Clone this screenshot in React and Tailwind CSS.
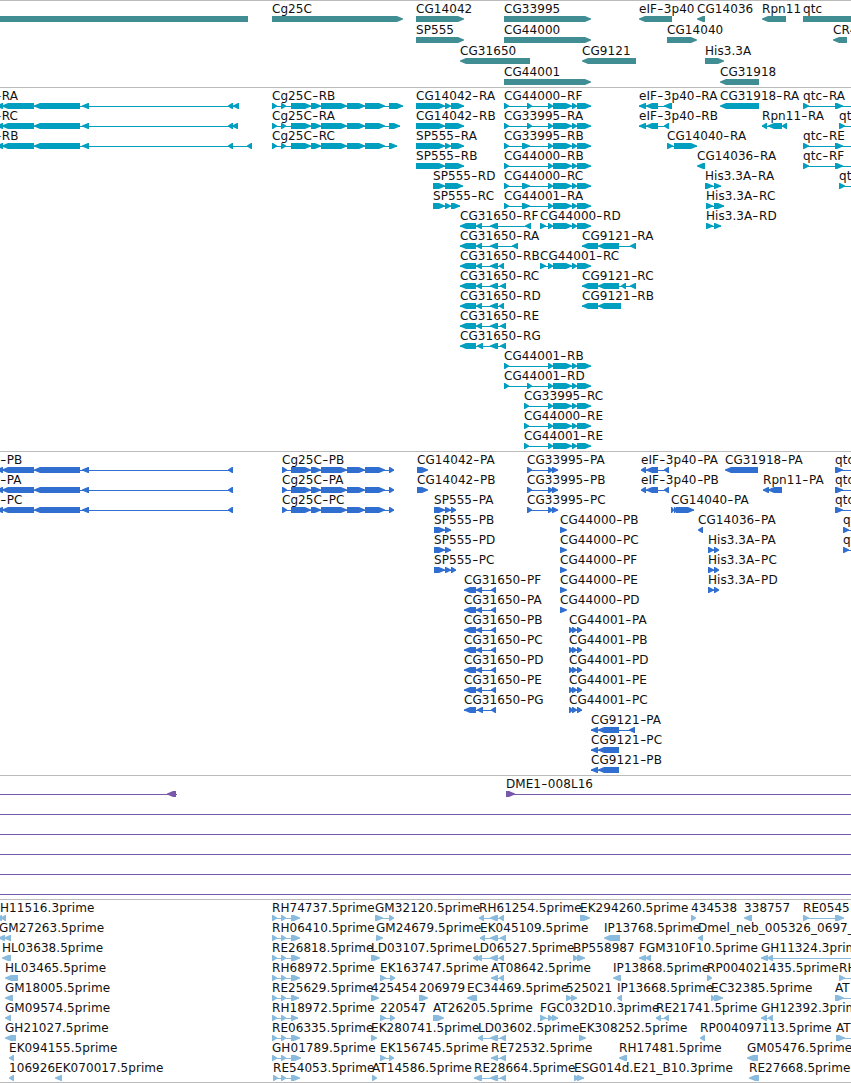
// every feature: [x, label, direction, exons, lineEnd]
// direction: 1 = forward, -1 = reverse, 0 = no arrow head

// genes
const genes = [
  [
    [-10, "", 0, [[-10, 248]]],
    [272, "Cg25C", 1, [[272, 403]]],
    [416, "CG14042", 1, [[416, 464]]],
    [504, "CG33995", 1, [[504, 591]]],
    [639, "eIF-3p40", -1, [[639, 672]]],
    [697, "CG14036", -1, [[697, 705]]],
    [762, "Rpn11", -1, [[762, 786]]],
    [803, "qtc", 0, [[803, 870]]],
  ],
  [
    [416, "SP555", 1, [[416, 464]]],
    [504, "CG44000", 1, [[504, 591]]],
    [667, "CG14040", 1, [[667, 697]]],
    [833, "CR43", -1, [[833, 847]]],
  ],
  [
    [460, "CG31650", -1, [[460, 530]]],
    [582, "CG9121", -1, [[582, 636]]],
    [705, "His3.3A", 1, [[705, 724]]],
  ],
  [
    [504, "CG44001", 1, [[504, 591]]],
    [720, "CG31918", -1, [[720, 759]]],
  ],
];

// exon groups shared between transcripts
const LEFT = [[-3, 3], [2, 34], [34, 80], [82, 89], [228, 233]];
const COL = [[291, 293], [292, 311], [311, 321], [321, 347], [347, 365], [365, 385]];
const TAIL = [[548, 553], [553, 572], [572, 577], [577, 591]];
const CG31 = [[460, 476], [476, 482], [490, 498]];
const CG91 = [[582, 598], [598, 619]];
const EIF = [[639, 646], [646, 658]];
const QTC = [[803, 809], [835, 843]];

const transcripts = [
  [
    [-5, "-RA", -1, [...LEFT, [233, 239]]],
    [272, "Cg25C-RB", 1, [[272, 277], [281, 286], ...COL, [389, 403]]],
    [416, "CG14042-RA", 1, [[416, 445], [445, 451], [451, 464]]],
    [504, "CG44000-RF", 1, [[504, 509], [527, 532], ...TAIL]],
    [639, "eIF-3p40-RA", -1, [...EIF, [664, 672]]],
    [720, "CG31918-RA", -1, [[720, 759]]],
    [803, "qtc-RA", 1, QTC, 870],
  ],
  [
    [-5, "-RC", -1, [...LEFT, [232, 238]]],
    [272, "Cg25C-RA", 1, [[272, 277], [281, 286], ...COL, [389, 400]]],
    [416, "CG14042-RB", 1, [[416, 445], [445, 464]]],
    [504, "CG33995-RA", 1, [[504, 509], [527, 532], ...TAIL]],
    [639, "eIF-3p40-RB", -1, [...EIF, [664, 669]]],
    [762, "Rpn11-RA", -1, [[762, 767], [768, 782], [782, 787]]],
    [839, "qtc-RD", 1, [[839, 845]], 870],
  ],
  [
    [-5, "-RB", -1, [...LEFT, [247, 252]]],
    [272, "Cg25C-RC", 1, [[272, 277], [281, 286], ...COL, [389, 397]]],
    [416, "SP555-RA", 1, [[416, 445], [445, 451], [451, 464]]],
    [504, "CG33995-RB", 1, [[504, 509], [522, 530], ...TAIL]],
    [667, "CG14040-RA", 1, [[667, 673], [674, 697]]],
    [803, "qtc-RE", 1, QTC, 870],
  ],
  [
    [416, "SP555-RB", 1, [[416, 445], [445, 464]]],
    [504, "CG44000-RB", 1, [[504, 509], ...TAIL]],
    [697, "CG14036-RA", -1, [[697, 705]]],
    [803, "qtc-RF", 1, QTC, 870],
  ],
  [
    [433, "SP555-RD", 1, [[433, 445], [445, 463]]],
    [504, "CG44000-RC", 1, [[504, 509], [522, 530], ...TAIL]],
    [705, "His3.3A-RA", 1, [[705, 713], [714, 721]]],
    [839, "qtc-RB", 1, [[839, 845]], 870],
  ],
  [
    [433, "SP555-RC", 1, [[433, 445], [445, 451], [451, 460]]],
    [504, "CG44001-RA", 1, [[504, 509], [522, 530], ...TAIL]],
    [706, "His3.3A-RC", 1, [[706, 713], [714, 724]]],
  ],
  [
    [460, "CG31650-RF", -1, [...CG31, [525, 531]]],
    [540, "CG44000-RD", 1, [[540, 546], ...TAIL]],
    [706, "His3.3A-RD", 1, [[706, 713], [714, 721]]],
  ],
  [
    [460, "CG31650-RA", -1, [...CG31, [512, 518]]],
    [582, "CG9121-RA", -1, [...CG91, [630, 636]]],
  ],
  [
    [460, "CG31650-RB", -1, [...CG31, [499, 504]]],
    [540, "CG44001-RC", 1, [[540, 546], ...TAIL]],
  ],
  [
    [460, "CG31650-RC", -1, [...CG31, [500, 506]]],
    [582, "CG9121-RC", -1, [...CG91, [621, 626], [630, 636]]],
  ],
  [
    [460, "CG31650-RD", -1, [...CG31, [499, 504]]],
    [582, "CG9121-RB", -1, [[582, 598], [598, 621]]],
  ],
  [[460, "CG31650-RE", -1, [...CG31, [500, 506]]]],
  [[460, "CG31650-RG", -1, [[460, 476], [477, 483], [490, 498], [500, 506]]]],
  [[504, "CG44001-RB", 1, [[504, 509], ...TAIL]]],
  [[504, "CG44001-RD", 1, [[504, 509], [527, 532], ...TAIL]]],
  [[524, "CG33995-RC", 1, [[524, 529], ...TAIL]]],
  [[524, "CG44000-RE", 1, [[524, 529], ...TAIL]]],
  [[524, "CG44001-RE", 1, [[524, 529], ...TAIL]]],
];

const COL_P = [[282, 287], ...COL, [389, 394]];
const P339 = [[527, 532], [548, 553], [552, 558]];
const PEIF = [[641, 646], [646, 658], [664, 669]];
const P555 = [[434, 445], [445, 451]];
const P316 = [[464, 476], [476, 482], [491, 496]];
const P440 = [[560, 567]];
const P441 = [[569, 573], [572, 577], [577, 582]];
const PHIS = [[708, 714], [714, 719]];

const proteins = [
  [
    [0, "-PB", -1, LEFT],
    [282, "Cg25C-PB", 1, COL_P],
    [417, "CG14042-PA", 1, [[417, 428]]],
    [527, "CG33995-PA", 1, P339],
    [641, "eIF-3p40-PA", -1, PEIF],
    [725, "CG31918-PA", -1, [[725, 758]]],
    [835, "qtc-PA", 1, [[835, 843]], 870],
  ],
  [
    [0, "-PA", -1, LEFT],
    [282, "Cg25C-PA", 1, COL_P],
    [417, "CG14042-PB", 1, [[417, 428]]],
    [527, "CG33995-PB", 1, P339],
    [641, "eIF-3p40-PB", -1, PEIF],
    [763, "Rpn11-PA", -1, [[763, 769], [768, 782]]],
    [835, "qtc-PE", 1, [[835, 843]], 870],
  ],
  [
    [0, "-PC", -1, LEFT],
    [282, "Cg25C-PC", 1, COL_P],
    [434, "SP555-PA", 1, [...P555, [451, 456]]],
    [527, "CG33995-PC", 1, P339],
    [671, "CG14040-PA", 1, [[671, 674], [674, 677], [676, 694]]],
    [835, "qtc-PF", 1, [[835, 843]], 870],
  ],
  [
    [434, "SP555-PB", 1, P555],
    [560, "CG44000-PB", 1, P440],
    [698, "CG14036-PA", -1, [[698, 703]]],
    [843, "qtc-PD", 1, [[843, 849]], 870],
  ],
  [
    [434, "SP555-PD", 1, P555],
    [560, "CG44000-PC", 1, P440],
    [708, "His3.3A-PA", 1, PHIS],
    [843, "qtc-PB", 1, [[843, 849]], 870],
  ],
  [
    [434, "SP555-PC", 1, [...P555, [451, 456]]],
    [560, "CG44000-PF", 1, P440],
    [708, "His3.3A-PC", 1, PHIS],
  ],
  [
    [464, "CG31650-PF", -1, P316],
    [560, "CG44000-PE", 1, P440],
    [708, "His3.3A-PD", 1, PHIS],
  ],
  [
    [464, "CG31650-PA", -1, P316],
    [560, "CG44000-PD", 1, P440],
  ],
  [
    [464, "CG31650-PB", -1, P316],
    [569, "CG44001-PA", 1, P441],
  ],
  [
    [464, "CG31650-PC", -1, P316],
    [569, "CG44001-PB", 1, P441],
  ],
  [
    [464, "CG31650-PD", -1, P316],
    [569, "CG44001-PD", 1, P441],
  ],
  [
    [464, "CG31650-PE", -1, P316],
    [569, "CG44001-PE", 1, P441],
  ],
  [
    [464, "CG31650-PG", -1, [[464, 476], [477, 483], [491, 496]]],
    [569, "CG44001-PC", 1, P441],
  ],
  [[591, "CG9121-PA", -1, [[591, 598], [598, 619], [629, 635]]]],
  [[591, "CG9121-PC", -1, [[591, 598], [598, 619]]]],
  [[591, "CG9121-PB", -1, [[591, 598], [598, 619]]]],
];

// BAC ends, most of them span the whole view
const bacs = [
  [
    [-10, "", -1, [[-20, -10], [167, 176]], 177],
    [506, "DME1-008L16", 1, [[506, 515]], 870],
  ],
  [[-10, "", 1, [], 870]],
  [[-10, "", 1, [], 870]],
  [[-10, "", 1, [], 870]],
  [[-10, "", 1, [], 870]],
  [[-10, "", 1, [], 870]],
];

const ests = [
  [
    [0, "H11516.3prime", -1, [[-3, 2], [1, 6]]],
    [272, "RH74737.5prime", 1, [[272, 277], [281, 286], [291, 300]]],
    [375, "GM32120.5prime", 1, [[375, 383], [389, 394]]],
    [479, "RH61254.5prime", -1, [[479, 484], [490, 498], [499, 504]]],
    [580, "EK294260.5prime", 1, [[580, 590]]],
    [691, "434538", 1, [[691, 696]]],
    [744, "338757", -1, [[744, 752]]],
    [803, "RE05451.5prime", 1, [[803, 809], [835, 844]]],
  ],
  [
    [-1, "GM27263.5prime", -1, [[-2, 5], [4, 11]]],
    [272, "RH06410.5prime", 1, [[272, 277], [281, 286], [291, 300]]],
    [376, "GM24679.5prime", 1, [[376, 383]]],
    [480, "EK045109.5prime", -1, [[480, 485], [490, 498], [500, 506]]],
    [604, "IP13768.5prime", -1, [[604, 620]]],
    [698, "Dmel_neb_005326_0697_1", -1, [[698, 703]]],
  ],
  [
    [2, "HL03638.5prime", -1, [[2, 11]]],
    [272, "RE26818.5prime", 1, [[272, 277], [281, 286], [291, 300]]],
    [371, "LD03107.5prime", 1, [[371, 380]]],
    [473, "LD06527.5prime", -1, [[473, 478], [476, 482], [490, 498], [499, 504]]],
    [573, "BP558987", 1, [[573, 578], [577, 585]]],
    [639, "FGM310F10.5prime", -1, [[639, 646], [645, 651]]],
    [761, "GH11324.3prime", -1, [[761, 768], [767, 773]], 870],
  ],
  [
    [5, "HL03465.5prime", -1, [[5, 18]]],
    [272, "RH68972.5prime", 1, [[272, 277], [281, 286], [291, 300]]],
    [380, "EK163747.5prime", 1, [[380, 386], [390, 395]]],
    [491, "AT08642.5prime", -1, [[491, 498], [499, 504]]],
    [613, "IP13868.5prime", -1, [[613, 621]]],
    [707, "RP004021435.5prime", 1, [[707, 712]]],
    [839, "RH", 1, [[839, 845]], 870],
  ],
  [
    [5, "GM18005.5prime", -1, [[5, 13]]],
    [272, "RE25629.5prime", 1, [[272, 277], [281, 286], [291, 299]]],
    [371, "425454", 1, [[371, 379]]],
    [419, "206979", 1, [[419, 428]]],
    [467, "EC34469.5prime", -1, [[467, 477]]],
    [566, "525021", 1, [[566, 572], [571, 577]]],
    [617, "IP13668.5prime", -1, [[617, 622]]],
    [711, "EC32385.5prime", 1, [[711, 715], [714, 723]]],
    [835, "AT", 1, [[835, 844]], 870],
  ],
  [
    [5, "GM09574.5prime", -1, [[5, 11]]],
    [272, "RH18972.5prime", 1, [[272, 277], [281, 286], [291, 298]]],
    [380, "220547", 1, [[380, 386], [390, 395]]],
    [433, "AT26205.5prime", 1, [[433, 444]]],
    [540, "FGC032D10.3prime", 1, [[540, 546], [548, 553], [552, 558]]],
    [656, "RE21741.5prime", -1, [[656, 661], [664, 669]]],
    [761, "GH12392.3prime", -1, [[761, 767], [768, 773]]],
  ],
  [
    [5, "GH21027.5prime", -1, [[5, 16]]],
    [272, "RE06335.5prime", 1, [[272, 277], [281, 286], [291, 300]]],
    [371, "EK280741.5prime", 1, [[371, 377]]],
    [478, "LD03602.5prime", -1, [[478, 483], [490, 498], [500, 506]]],
    [579, "EK308252.5prime", 1, [[579, 586]]],
    [700, "RP004097113.5prime", -1, [[700, 705]]],
    [836, "AT", 1, [[836, 845]], 870],
  ],
  [
    [9, "EK094155.5prime", -1, [[9, 14]]],
    [272, "GH01789.5prime", 1, [[272, 277], [281, 286], [291, 301]]],
    [380, "EK156745.5prime", 1, [[380, 386], [389, 394]]],
    [491, "RE72532.5prime", -1, [[491, 498], [500, 506]]],
    [619, "RH17481.5prime", -1, [[619, 627]]],
    [747, "GM05476.5prime", -1, [[747, 758]]],
  ],
  [
    [9, "106926", -1, [[9, 14]]],
    [55, "EK070017.5prime", -1, [[55, 62]]],
    [273, "RE54053.5prime", 1, [[273, 278], [281, 286], [291, 300]]],
    [372, "AT14586.5prime", 1, [[372, 377]]],
    [474, "RE28664.5prime", -1, [[474, 482], [490, 498], [500, 506]]],
    [574, "ESG014d.E21_B10.3prime", 1, [[574, 579], [577, 584]]],
    [749, "RE27668.5prime", -1, [[749, 759]]],
  ],
];

// box with a pointed head, short exons are only the head
function exonPath([a, b], dir) {
  if (dir === 0) return `M${a} 0H${b}V6H${a}Z`;
  const head = Math.min(7, b - a);
  if (dir > 0) return `M${a} 0H${b - head + 1}L${b} 2.5V3.5L${b - head + 1} 6H${a}Z`;
  return `M${b} 0H${a + head - 1}L${a} 2.5V3.5L${a + head - 1} 6H${b}Z`;
}

function Glyph({ feature }) {
  const [x, , dir, exons, lineEnd] = feature;
  const start = x < 5 ? -5 : x;
  const end = lineEnd ?? exons[exons.length - 1][1];
  return (
    <g>
      {(exons.length !== 1 || lineEnd) && <rect x={start} y="3" width={end - start} height="1" />}
      {exons.map((exon, i) => (
        <path key={i} d={exonPath(exon, dir)} />
      ))}
    </g>
  );
}

function Label({ x, text }) {
  return (
    <span className="absolute top-0 whitespace-pre" style={{ left: x }}>
      {text.split("-").map((part, i) => (
        <span key={i}>
          {i > 0 && <span className="inline-block scale-x-140 px-[1.2px]">-</span>}
          {part}
        </span>
      ))}
    </span>
  );
}

function Track({ rows, color, rowHeight = "h-5", pad = "pb-[3px]" }) {
  return (
    <section className={`border-t border-[#bbbbbb] ${pad}`}>
      {rows.map((row, i) => (
        <div key={i} className={rowHeight}>
          <div className="relative h-[15px] leading-4">
            {row.map((f, j) => f[1] && <Label key={j} x={f[0]} text={f[1]} />)}
          </div>
          <svg className={`block h-[6px] w-[851px] ${color}`}>
            {row.map((f, j) => (
              <Glyph key={j} feature={f} />
            ))}
          </svg>
        </div>
      ))}
    </section>
  );
}

export default function App() {
  return (
    <main className="h-[1083px] w-[851px] overflow-hidden bg-white font-['DejaVu_Sans',sans-serif] text-[12px] tracking-[0.06px] text-[#111111]">
      <Track rows={genes} color="fill-[#408e93]" rowHeight="h-[21px]" pad="pb-[2px]" />
      <Track rows={transcripts} color="fill-[#009fbf]" />
      <Track rows={proteins} color="fill-[#306fd0]" />
      <Track rows={bacs} color="fill-[#7858a8]" />
      <Track rows={ests} color="fill-[#88bbdd]" pad="pb-[2px]" />
      <div className="border-t border-[#bbbbbb]" />
    </main>
  );
}
